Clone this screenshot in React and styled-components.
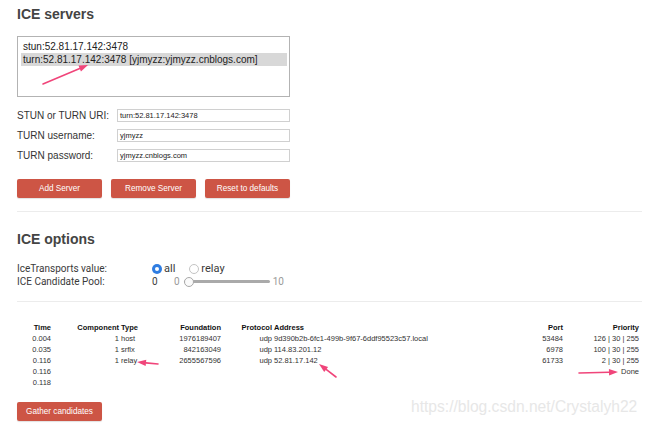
import React from "react";
import styled, { createGlobalStyle } from "styled-components";

const GlobalStyle = createGlobalStyle`
  html, body {
    margin: 0;
    padding: 0;
    background: #fff;
  }
  body {
    font-family: "Liberation Sans", Arial, sans-serif;
    color: #333;
  }
`;

const RED = "#cd5545";
const PINK = "#f0457a";

const Page = styled.div`
  position: relative;
  width: 650px;
  height: 429px;
  overflow: hidden;
  padding: 0 10px 0 17px;
  box-sizing: border-box;
`;

const Heading = styled.h2`
  margin: ${(p) => p.$top}px 0 0 0;
  font-size: 14px;
  line-height: 17px;
  font-weight: bold;
  color: #444;
`;

const ServerList = styled.div`
  margin-top: 13px;
  width: 273px;
  height: 61px;
  box-sizing: border-box;
  border: 1px solid #b3b3b3;
  padding: 3px 2px 0 3px;
`;

const ServerItem = styled.div`
  height: 13px;
  line-height: 13px;
  padding-left: 2px;
  font-size: 10px;
  color: #222;
  background: ${(p) => (p.$selected ? "#d8d8d8" : "transparent")};
  white-space: nowrap;
`;

const Form = styled.div`
  margin-top: 8px;
  display: flex;
  flex-direction: column;
`;

const FormRow = styled.div`
  display: flex;
  align-items: center;
  height: 20px;
`;

const Label = styled.span`
  width: 100px;
  font-size: 10px;
  color: #333;
`;

const Input = styled.div`
  width: 173px;
  height: 13px;
  box-sizing: border-box;
  border: 1px solid #d0d0d0;
  font-size: 7.5px;
  line-height: 11px;
  padding-left: 2px;
  color: #222;
`;

const ButtonRow = styled.div`
  display: flex;
  gap: 9px;
  margin-top: 14px;
`;

const Button = styled.button`
  width: 85px;
  height: 19px;
  border: none;
  border-radius: 2px;
  background: ${RED};
  color: #fff;
  font-family: "Liberation Sans", Arial, sans-serif;
  font-size: 8.2px;
  padding: 0;
  margin: ${(p) => (p.$top ? `${p.$top}px 0 0 0` : "0")};
  box-shadow: 0 1px 1px rgba(0, 0, 0, 0.12);
`;

const Rule = styled.hr`
  margin: ${(p) => p.$top}px 0 0 0;
  border: none;
  border-top: 1px solid #ececec;
  width: 625px;
`;

const Options = styled.div`
  margin-top: 14px;
  font-family: Roboto, "Liberation Sans", sans-serif;
  font-size: 10px;
  color: #3a3a3a;
`;

const OptionRow = styled.div`
  display: flex;
  align-items: center;
  height: 13px;
`;

const OptionLabel = styled.span`
  width: 135px;
`;

const Radio = styled.span`
  width: 10px;
  height: 10px;
  box-sizing: border-box;
  border-radius: 50%;
  border: ${(p) => (p.$checked ? "none" : "1px solid #c4c4c4")};
  background: ${(p) => (p.$checked ? "#2f7de1" : "#fff")};
  display: flex;
  align-items: center;
  justify-content: center;
  margin-right: 2px;
  &::after {
    content: "";
    width: 4px;
    height: 4px;
    border-radius: 50%;
    background: ${(p) => (p.$checked ? "#fff" : "transparent")};
  }
`;

const RadioText = styled.span`
  font-size: 11px;
  margin-right: ${(p) => p.$gap || 0}px;
`;

const PoolValue = styled.span`
  width: 22px;
`;

const Faint = styled.span`
  color: #999;
`;

const Slider = styled.div`
  position: relative;
  width: 86px;
  height: 10px;
  margin: 0 3px 0 4px;
  display: flex;
  align-items: center;
`;

const Track = styled.div`
  flex: 1;
  height: 3px;
  border-radius: 2px;
  background: #aaa;
`;

const Thumb = styled.div`
  position: absolute;
  left: 0;
  top: 0;
  width: 10px;
  height: 10px;
  box-sizing: border-box;
  border-radius: 50%;
  border: 1px solid #a8a8a8;
  background: #fafafa;
`;

const Table = styled.div`
  margin-top: 20px;
  display: grid;
  grid-template-columns: 35px 68px 40px 62px 51px 227px 64px 76px;
  grid-auto-rows: 11px;
  font-size: 7.5px;
  line-height: 11px;
  color: #333;
`;

const Cell = styled.div`
  padding: 0 1px;
  text-align: ${(p) => (p.$left ? "left" : "right")};
  font-weight: ${(p) => (p.$head ? "bold" : "normal")};
  color: ${(p) => (p.$head ? "#111" : "#333")};
  white-space: nowrap;
`;

const Watermark = styled.div`
  position: absolute;
  left: 411px;
  top: 398px;
  font-size: 15.6px;
  color: #e7e7e7;
  font-family: "Liberation Sans", Arial, sans-serif;
  white-space: nowrap;
`;

const Overlay = styled.svg`
  position: absolute;
  left: 0;
  top: 0;
  pointer-events: none;
`;

const columns = [
  { name: "Time" },
  { name: "Component" },
  { name: "Type", left: true },
  { name: "Foundation" },
  { name: "Protocol" },
  { name: "Address", left: true },
  { name: "Port" },
  { name: "Priority" },
];

const rows = [
  ["0.004", "1", "host", "1976189407", "udp", "9d390b2b-6fc1-499b-9f67-6ddf95523c57.local", "53484", "126 | 30 | 255"],
  ["0.035", "1", "srflx", "842163049", "udp", "114.83.201.12", "6978", "100 | 30 | 255"],
  ["0.116", "1", "relay", "2655567596", "udp", "52.81.17.142", "61733", "2 | 30 | 255"],
  ["0.116", "", "", "", "", "", "", "Done"],
  ["0.118", "", "", "", "", "", "", ""],
];

const arrows = [
  [43, 84, 88, 65],
  [158, 364, 137, 362],
  [336, 377, 319, 364],
  [579, 373, 618, 372],
];

const Arrow = ({ x1, y1, x2, y2 }) => {
  const dx = x2 - x1;
  const dy = y2 - y1;
  const len = Math.hypot(dx, dy);
  const ux = dx / len;
  const uy = dy / len;
  const bx = x2 - ux * 9;
  const by = y2 - uy * 9;
  const px = -uy * 3.2;
  const py = ux * 3.2;
  return (
    <g>
      <line x1={x1} y1={y1} x2={bx} y2={by} stroke={PINK} strokeWidth="1.6" strokeLinecap="round" />
      <polygon points={`${x2},${y2} ${bx + px},${by + py} ${bx - px},${by - py}`} fill={PINK} />
    </g>
  );
};

const App = () => {
  return (
    <Page>
      <GlobalStyle />
      <Heading $top={6}>ICE servers</Heading>
      <ServerList>
        <ServerItem>stun:52.81.17.142:3478</ServerItem>
        <ServerItem $selected>turn:52.81.17.142:3478 [yjmyzz:yjmyzz.cnblogs.com]</ServerItem>
      </ServerList>

      <Form>
        <FormRow>
          <Label>STUN or TURN URI:</Label>
          <Input>turn:52.81.17.142:3478</Input>
        </FormRow>
        <FormRow>
          <Label>TURN username:</Label>
          <Input>yjmyzz</Input>
        </FormRow>
        <FormRow>
          <Label>TURN password:</Label>
          <Input>yjmyzz.cnblogs.com</Input>
        </FormRow>
      </Form>

      <ButtonRow>
        <Button>Add Server</Button>
        <Button>Remove Server</Button>
        <Button>Reset to defaults</Button>
      </ButtonRow>

      <Rule $top={13} />

      <Heading $top={19}>ICE options</Heading>
      <Options>
        <OptionRow>
          <OptionLabel>IceTransports value:</OptionLabel>
          <Radio $checked />
          <RadioText $gap={14}>all</RadioText>
          <Radio />
          <RadioText>relay</RadioText>
        </OptionRow>
        <OptionRow>
          <OptionLabel>ICE Candidate Pool:</OptionLabel>
          <PoolValue>0</PoolValue>
          <Faint>0</Faint>
          <Slider>
            <Track />
            <Thumb />
          </Slider>
          <Faint>10</Faint>
        </OptionRow>
      </Options>

      <Rule $top={13} />

      <Table>
        {columns.map((c) => (
          <Cell key={c.name} $head $left={c.left}>
            {c.name}
          </Cell>
        ))}
        {rows.map((r, i) =>
          r.map((v, j) => (
            <Cell key={`${i}-${j}`} $left={columns[j].left}>
              {v}
            </Cell>
          ))
        )}
      </Table>

      <Button $top={14}>Gather candidates</Button>

      <Watermark>https://blog.csdn.net/Crystalyh22</Watermark>
      <Overlay width="650" height="429">
        {arrows.map(([x1, y1, x2, y2], i) => (
          <Arrow key={i} x1={x1} y1={y1} x2={x2} y2={y2} />
        ))}
      </Overlay>
    </Page>
  );
};

export default App;
